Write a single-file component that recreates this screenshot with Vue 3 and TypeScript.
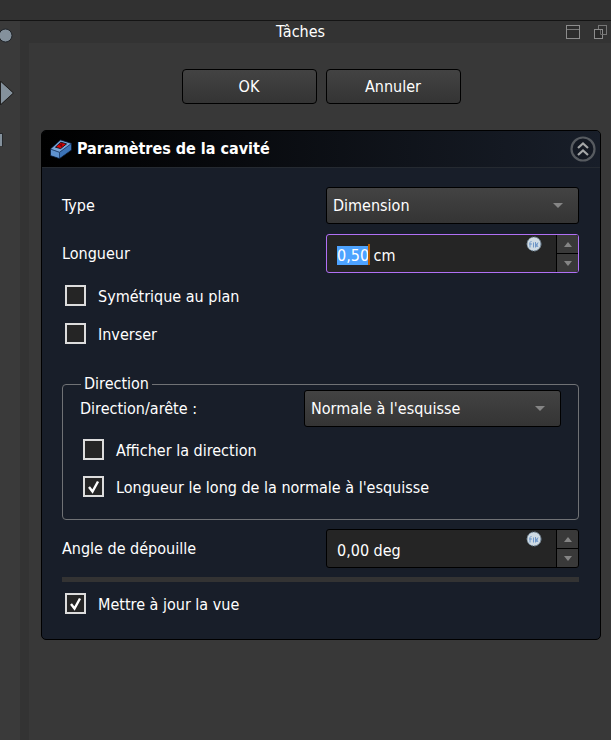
<script setup lang="ts">
import { onMounted, ref } from 'vue'

const type = ref('Dimension')
const length = ref('0,50 cm')
const symmetric = ref(false)
const reversed = ref(false)
const direction = ref("Normale à l'esquisse")
const showDirection = ref(false)
const alongNormal = ref(true)
const taper = ref('0,00 deg')
const updateView = ref(true)
const open = ref(true)
const lengthInput = ref<HTMLInputElement | null>(null)
const lengthFocused = ref(false)

function step(value: string, delta: number): string {
  const [num, unit] = value.split(' ')
  const next = parseFloat(num.replace(',', '.')) + delta
  return `${next.toFixed(2).replace('.', ',')} ${unit}`
}

onMounted(() => {
  lengthInput.value?.focus()
  lengthInput.value?.setSelectionRange(0, 4)
})
</script>

<template>
  <div class="window">
    <div class="topbar"></div>
    <div class="workspace">
      <aside class="rail">
        <svg width="20" height="140" viewBox="0 0 20 140" aria-hidden="true">
          <circle cx="5.500" cy="14.500" r="6.500" fill="#84919c" stroke="#20252a" />
          <path d="M1 61 L13 72 L1 83 Z" fill="#84919c" />
          <path d="M0.500 60v24M1 60.500L13.500 72 1 83.500" fill="none" stroke="#202020" />
          <path d="M0 113h2v12h-2z" fill="#84919c" />
          <path d="M0 112.500h2.500v13" fill="none" stroke="#24282c" />
        </svg>
      </aside>
      <section class="dock">
        <header class="dock-title">
          <h1>Tâches</h1>
          <button type="button" class="tool" aria-label="Réduire">
            <svg width="14" height="14" viewBox="0 0 14 14">
              <rect x=".5" y=".5" width="13" height="13" fill="#2d2d2d" stroke="#8c8c8c" />
              <path d="M1 4.500h12" stroke="#777" />
            </svg>
          </button>
          <button type="button" class="tool" aria-label="Détacher">
            <svg width="14" height="14" viewBox="0 0 14 14">
              <rect x="4.500" y=".5" width="8" height="9" fill="#303030" stroke="#777" />
              <rect x=".5" y="4.500" width="8" height="9" fill="#292929" stroke="#8c8c8c" />
              <path d="M6.500 5v4.500h2" fill="none" stroke="#666" />
            </svg>
          </button>
        </header>

        <form class="content" @submit.prevent>
          <div class="actions">
            <button type="button" class="push">OK</button>
            <button type="button" class="push">Annuler</button>
          </div>

          <section class="panel">
            <header class="panel-head">
              <svg width="22" height="20" viewBox="0 0 22 20" aria-hidden="true">
                <path d="M0.500 10L10.500 1l11 3.500v6.500L9.500 19.500l-9-3z" fill="#3468a8" stroke="#10233f" />
                <path d="M1 10L10.500 1.500l10.500 3.200L9.500 13z" fill="#7ba6d8" />
                <path d="M1 10.500L9.500 13.500v5.500L1 16.200z" fill="#5f92cf" />
                <path d="M9.500 13.500L21 5v5.800L9.500 19z" fill="#3c74b8" />
                <path d="M1 10.300l8.500 3L21 4.800M9.500 13.500V19" fill="none" stroke="#1c3a63" stroke-width=".8" />
                <path d="M5.500 8.200L10.800 3.200l5.700 1.700-5.800 4.700z" fill="#e00000" stroke="#1a1420" />
                <path d="M8.500 5.500l3.500 3 .5-4.500z" fill="#7c0008" />
              </svg>
              <h2>Paramètres de la cavité</h2>
              <button type="button" class="collapse" aria-label="Replier" @click="open = !open">
                <svg width="26" height="26" viewBox="0 0 26 26">
                  <circle cx="13" cy="13" r="11.500" fill="#141923" stroke="#575b60" stroke-width="2.200" />
                  <path d="M8 12l5-4.500 5 4.500M8 19l5-4.500 5 4.500" fill="none" stroke="#a4a6a7" stroke-width="2.200" />
                </svg>
              </button>
            </header>

            <div v-if="open" class="panel-body">
              <div class="row">
                <label for="type">Type</label>
                <div class="select">
                  <select id="type" v-model="type">
                    <option>Dimension</option>
                  </select>
                  <svg width="10" height="5" viewBox="0 0 10 5"><path d="M0 0h10L5 5z" fill="#858585" /></svg>
                </div>
              </div>

              <div class="row length-row">
                <label for="length">Longueur</label>
                <div class="spin">
                  <div class="entry">
                    <input id="length" ref="lengthInput" v-model="length" type="text" @focus="lengthFocused = true" @blur="lengthFocused = false" />
                    <span v-if="lengthFocused" class="caret"></span>
                    <svg class="expr" width="16" height="16" viewBox="0 0 16 16">
                      <circle cx="8" cy="8" r="7" fill="#cfdbe4" stroke="#6d8294" stroke-dasharray="2 1" />
                      <path d="M4 11.500V6.500l1.500-1.500M3 8h3M7.500 11.500v-5M9.500 6v5.500M9.500 7l2.500 4M12 6.500l-2 4.500" fill="none" stroke="#6f97c8" />
                    </svg>
                  </div>
                  <div class="steps">
                    <button type="button" aria-label="Augmenter la longueur" @click="length = step(length, 0.1)">
                      <svg width="8" height="5" viewBox="0 0 8 5"><path d="M0 5h8L4 0z" /></svg>
                    </button>
                    <button type="button" aria-label="Diminuer la longueur" @click="length = step(length, -0.1)">
                      <svg width="8" height="5" viewBox="0 0 8 5"><path d="M0 0h8L4 5z" /></svg>
                    </button>
                  </div>
                </div>
              </div>

              <div class="checks">
                <label class="check"><input v-model="symmetric" type="checkbox" /><span>Symétrique au plan</span></label>
                <label class="check"><input v-model="reversed" type="checkbox" /><span>Inverser</span></label>
              </div>

              <fieldset>
                <legend>Direction</legend>
                <div class="row">
                  <label for="direction">Direction/arête :</label>
                  <div class="select">
                    <select id="direction" v-model="direction">
                      <option>Normale à l'esquisse</option>
                    </select>
                    <svg width="10" height="5" viewBox="0 0 10 5"><path d="M0 0h10L5 5z" fill="#858585" /></svg>
                  </div>
                </div>
                <div class="checks">
                  <label class="check"><input v-model="showDirection" type="checkbox" /><span>Afficher la direction</span></label>
                  <label class="check"><input v-model="alongNormal" type="checkbox" /><span>Longueur le long de la normale à l'esquisse</span></label>
                </div>
              </fieldset>

              <div class="row">
                <label for="taper">Angle de dépouille</label>
                <div class="spin">
                  <div class="entry">
                    <input id="taper" v-model="taper" type="text" />
                    <svg class="expr" width="16" height="16" viewBox="0 0 16 16">
                      <circle cx="8" cy="8" r="7" fill="#cfdbe4" stroke="#6d8294" stroke-dasharray="2 1" />
                      <path d="M4 11.500V6.500l1.500-1.500M3 8h3M7.500 11.500v-5M9.500 6v5.500M9.500 7l2.500 4M12 6.500l-2 4.500" fill="none" stroke="#6f97c8" />
                    </svg>
                  </div>
                  <div class="steps">
                    <button type="button" aria-label="Augmenter l'angle" @click="taper = step(taper, 1)">
                      <svg width="8" height="5" viewBox="0 0 8 5"><path d="M0 5h8L4 0z" /></svg>
                    </button>
                    <button type="button" aria-label="Diminuer l'angle" @click="taper = step(taper, -1)">
                      <svg width="8" height="5" viewBox="0 0 8 5"><path d="M0 0h8L4 5z" /></svg>
                    </button>
                  </div>
                </div>
              </div>

              <hr />
              <label class="check update"><input v-model="updateView" type="checkbox" /><span>Mettre à jour la vue</span></label>
            </div>
          </section>
        </form>
      </section>
    </div>
  </div>
</template>

<style>
body {
  background: #383838;
}
</style>

<style scoped>
* {
  box-sizing: border-box;
}
.window {
  display: flex;
  flex-direction: column;
  min-height: 100vh;
  background: #383838;
  color: #fff;
  font: 16px/20px "DejaVu Sans Condensed", "Noto Sans", sans-serif;
}
button,
input,
select {
  margin: 0;
  color: inherit;
  font: inherit;
}
h1,
h2 {
  margin: 0;
  font-size: 16px;
}
svg {
  display: block;
  flex: none;
}
.topbar {
  height: 21px;
  background: #313131;
  border-bottom: 1px solid #141414;
}
.workspace {
  display: flex;
  flex: 1;
}
.rail {
  width: 20px;
  background: #3a3a3a;
}
.dock {
  flex: 1;
  min-width: 0;
  border-left: 9px solid #333;
}
.dock-title {
  display: flex;
  align-items: center;
  gap: 14px;
  height: 22px;
  padding-right: 3px;
  background: #333;
}
.dock-title h1 {
  flex: 1;
  padding-left: 20px;
  font-weight: 400;
  text-align: center;
}
.tool,
.collapse {
  padding: 0;
  border: 0;
  background: none;
}
.content {
  padding: 26px 10px 20px 12px;
}
.actions {
  display: flex;
  justify-content: center;
  gap: 9px;
  margin-bottom: 26px;
}
.push {
  width: 135px;
  height: 35px;
  padding: 0;
  border: 1px solid #000;
  border-radius: 4px;
  background: linear-gradient(#434343, #343434);
}
.panel {
  overflow: hidden;
  border: 1px solid #000;
  border-radius: 5px;
  background: #181e29;
}
.panel-head {
  display: flex;
  align-items: center;
  gap: 5px;
  height: 37px;
  padding: 0 4px 0 8px;
  border-bottom: 1px solid #252a31;
  background: linear-gradient(90deg, #000, #181e29);
}
.panel-head h2 {
  flex: 1;
  font-weight: 700;
}
.panel-body {
  padding: 19px 21px 25px 20px;
}
.row {
  display: grid;
  grid-template-columns: 264px minmax(0, 1fr);
  align-items: center;
}
.length-row {
  margin-top: 10px;
}
.select {
  position: relative;
}
.select select {
  display: block;
  width: 100%;
  height: 37px;
  padding: 0 28px 0 6px;
  appearance: none;
  border: 1px solid #000;
  border-radius: 3px;
  outline: 0;
  background: linear-gradient(#434343, #343434);
}
.select svg {
  position: absolute;
  top: 16px;
  right: 16px;
  pointer-events: none;
}
.spin {
  display: flex;
  height: 39px;
  overflow: hidden;
  border: 1px solid #000;
  border-radius: 3px;
  background: #252525;
}
.spin:focus-within {
  border-color: #b070f5;
}
.entry {
  position: relative;
  flex: 1;
  min-width: 0;
}
.entry input {
  width: 100%;
  height: 100%;
  padding: 4px 32px 0 10px;
  border: 0;
  outline: 0;
  background: none;
}
.entry input::selection {
  background: #4da3ff;
  color: #fff;
}
.caret {
  position: absolute;
  top: 9px;
  left: 41px;
  width: 2px;
  height: 21px;
  background: #b85c00;
}
.expr {
  position: absolute;
  top: 1px;
  right: 14px;
}
.steps {
  display: flex;
  flex-direction: column;
  gap: 1px;
  width: 22px;
  border-left: 1px solid #000;
  background: #000;
}
.steps button {
  display: flex;
  flex: 1;
  align-items: center;
  justify-content: center;
  padding: 0;
  border: 0;
  background: #393939;
}
.steps path {
  fill: #858585;
}
.checks {
  display: grid;
  gap: 17px;
  margin: 12px 0 0 3px;
}
.check {
  display: flex;
  align-items: center;
  gap: 12px;
  height: 21px;
}
.check input {
  flex: none;
  width: 21px;
  height: 21px;
  appearance: none;
  border: 2px solid #dcdcdc;
  background: #252525;
}
.check input:checked {
  background: #252525 url("data:image/svg+xml,%3Csvg xmlns='http://www.w3.org/2000/svg' viewBox='0 0 17 17'%3E%3Cpath d='M4 9l3.500 4.500L13 3.500' fill='none' stroke='%23fff' stroke-width='2.400'/%3E%3C/svg%3E");
}
.check span {
  padding-top: 2px;
}
fieldset {
  min-width: 0;
  margin: 34px 0 9px;
  padding: 0 17px 22px;
  border: 1px solid #707275;
  border-radius: 4px;
}
legend {
  margin-left: 1px;
  padding: 0 3px;
  line-height: 12px;
}
fieldset .row {
  grid-template-columns: 224px minmax(0, 1fr);
}
fieldset .checks {
  gap: 16px;
}
hr {
  height: 5px;
  margin: 9px 0 11px;
  border: 0;
  background: #333;
}
.update {
  margin-left: 3px;
}
</style>
